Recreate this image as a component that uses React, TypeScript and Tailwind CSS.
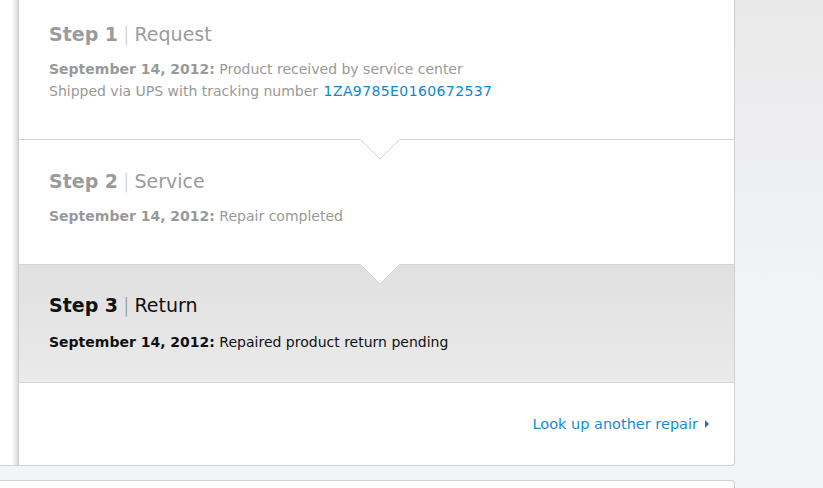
import React from "react";

const font = { fontFamily: '"DejaVu Sans", "Liberation Sans", sans-serif' };

function Notch({ fill }: { fill: string }) {
  return (
    <svg
      className="absolute top-[-1px] left-[341px]"
      width="40"
      height="21"
      viewBox="0 0 40 21"
    >
      <polygon points="0,0 20,20 40,0" fill={fill} />
      <polyline points="0.5,0.5 20,20 39.5,0.5" fill="none" stroke="#d4d4d4" strokeWidth="1" />
    </svg>
  );
}

export default function App() {
  return (
    <div
      className="w-[823px] h-[488px] overflow-hidden bg-[linear-gradient(to_bottom,#e9e9ea,#f3f4f6_320px)] text-[14px]"
      style={font}
    >
      <div className="w-[735px] h-[466px] bg-white border-r border-b border-[#cfcfcf] rounded-br-[4px] flex">
        <div className="w-[18px] shrink-0 bg-linear-to-r from-white from-65% to-[#dadada]" />
        <div className="flex-1 border-l border-[#cbcbcb] flex flex-col">
          {/* Step 1 */}
          <div className="pt-[22px] pl-[30px] border-b border-[#d6d6d6] h-[140px]">
            <div className="h-[24px] leading-[24px] text-[19px] text-[#9b9b9b]">
              <span className="font-bold">Step 1</span>
              <span className="text-[#c4c4c4] mx-[5px] font-light">|</span>
              <span>Request</span>
            </div>
            <div className="mt-[12px] leading-[22px] text-[#999]">
              <div>
                <span className="font-bold">September 14, 2012:</span> Product received by service center
              </div>
              <div>
                Shipped via UPS with tracking number <span className="ml-[1px] text-[#0a88cf] tracking-[0.4px]">1ZA9785E0160672537</span>
              </div>
            </div>
          </div>
          {/* Step 2 */}
          <div className="relative pt-[29px] pl-[30px] border-b border-[#d6d6d6] h-[125px]">
            <Notch fill="#ffffff" />
            <div className="h-[24px] leading-[24px] text-[19px] text-[#9b9b9b]">
              <span className="font-bold">Step 2</span>
              <span className="text-[#c4c4c4] mx-[5px] font-light">|</span>
              <span>Service</span>
            </div>
            <div className="mt-[12px] leading-[22px] text-[#999]">
              <span className="font-bold">September 14, 2012:</span> Repair completed
            </div>
          </div>
          {/* Step 3 */}
          <div className="relative pt-[28px] pl-[30px] border-b border-[#d6d6d6] h-[118px] bg-linear-to-b from-[#e0e0e0] to-[#eaeaea]">
            <Notch fill="#ffffff" />
            <div className="h-[24px] leading-[24px] text-[19px] text-[#111]">
              <span className="font-bold">Step 3</span>
              <span className="text-[#888] mx-[5px] font-light">|</span>
              <span>Return</span>
            </div>
            <div className="mt-[14px] leading-[22px] text-[#111]">
              <span className="font-bold">September 14, 2012:</span> Repaired product return pending
            </div>
          </div>
          {/* Link */}
          <div className="flex-1 flex items-center justify-end pr-[25px]">
            <span className="text-[#1a8ad0] text-[14.5px] leading-[22px]">Look up another repair</span>
            <svg className="ml-[7px]" width="4" height="8" viewBox="0 0 4 8">
              <polygon points="0,0 4,4 0,8" fill="#2a6fa6" />
            </svg>
          </div>
        </div>
      </div>
      <div className="h-[14px]" />
      <div className="w-[735px] h-[20px] bg-white border-t border-r border-[#cfcfcf] rounded-tr-[4px]" />
    </div>
  );
}
